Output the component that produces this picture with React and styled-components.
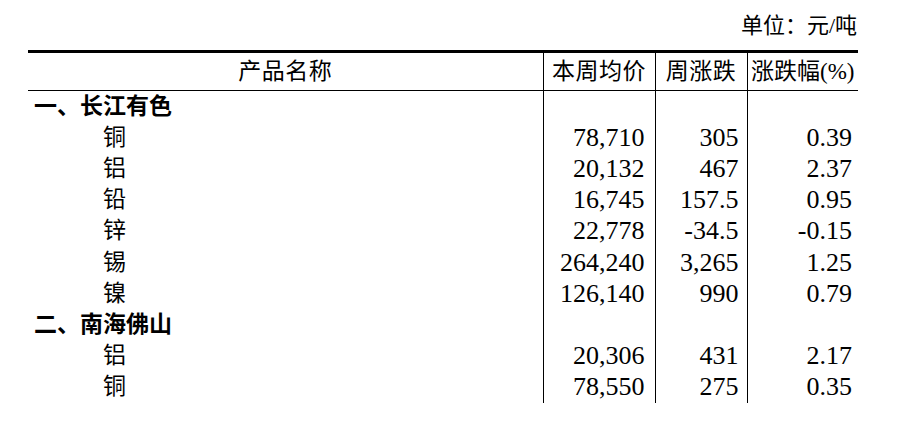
import React from "react";
import styled, { createGlobalStyle } from "styled-components";

const GlobalStyle = createGlobalStyle`
  html, body {
    margin: 0;
    padding: 0;
    background: #ffffff;
  }
  body {
    font-family: "Liberation Serif", "Noto Sans CJK SC", serif;
    color: #000000;
  }
`;

const sections = [
  {
    title: "一、长江有色",
    items: [
      ["铜", "78,710", "305", "0.39"],
      ["铝", "20,132", "467", "2.37"],
      ["铅", "16,745", "157.5", "0.95"],
      ["锌", "22,778", "-34.5", "-0.15"],
      ["锡", "264,240", "3,265", "1.25"],
      ["镍", "126,140", "990", "0.79"],
    ],
  },
  {
    title: "二、南海佛山",
    items: [
      ["铝", "20,306", "431", "2.17"],
      ["铜", "78,550", "275", "0.35"],
    ],
  },
];

const Page = styled.div`
  width: 906px;
  height: 428px;
  box-sizing: border-box;
  padding: 12px 48px 0 28px;
`;

const Unit = styled.div`
  text-align: right;
  font-size: 22px;
  line-height: 28px;
  height: 38px;
  padding-right: 1px;
`;

const Table = styled.table`
  width: 830px;
  border-collapse: collapse;
  table-layout: fixed;
  border-top: 3px solid #000;
  font-size: 23px;
  line-height: 28px;
`;

const Col = styled.col`
  width: ${(p) => p.$w}px;
`;

const HeadCell = styled.th`
  height: 37px;
  padding: 0;
  font-weight: 400;
  text-align: center;
  white-space: nowrap;
  border-bottom: 1px solid #000;
  border-left: ${(p) => (p.$first ? "none" : "1px solid #000")};
  letter-spacing: ${(p) => (p.$tight ? "0" : "0.5px")};
`;

const Row = styled.tr`
  height: 31.2px;
`;

const NameCell = styled.td`
  height: 31.2px;
  padding: 0 0 0 ${(p) => (p.$section ? 6 : 75)}px;
  font-weight: ${(p) => (p.$section ? 700 : 400)};
  white-space: nowrap;
`;

const NumCell = styled.td`
  height: 31.2px;
  padding: 0 ${(p) => p.$pad}px 0 0;
  text-align: right;
  white-space: nowrap;
  border-left: 1px solid #000;
  font-size: 26px;
`;

const pads = [10, 8, 6];

export default function App() {
  return (
    <>
      <GlobalStyle />
      <Page>
        <Unit>单位：元/吨</Unit>
        <Table>
          <colgroup>
            <Col $w={515} />
            <Col $w={112} />
            <Col $w={92} />
            <Col $w={111} />
          </colgroup>
          <thead>
            <tr>
              <HeadCell $first>产品名称</HeadCell>
              <HeadCell>本周均价</HeadCell>
              <HeadCell>周涨跌</HeadCell>
              <HeadCell $tight>涨跌幅(%)</HeadCell>
            </tr>
          </thead>
          <tbody>
            {sections.map((s) => (
              <React.Fragment key={s.title}>
                <Row>
                  <NameCell $section>{s.title}</NameCell>
                  {pads.map((p, i) => (
                    <NumCell key={i} $pad={p} />
                  ))}
                </Row>
                {s.items.map((it, idx) => (
                  <Row key={s.title + idx}>
                    <NameCell>{it[0]}</NameCell>
                    {it.slice(1).map((v, i) => (
                      <NumCell key={i} $pad={pads[i]}>
                        {v}
                      </NumCell>
                    ))}
                  </Row>
                ))}
              </React.Fragment>
            ))}
          </tbody>
        </Table>
      </Page>
    </>
  );
}
